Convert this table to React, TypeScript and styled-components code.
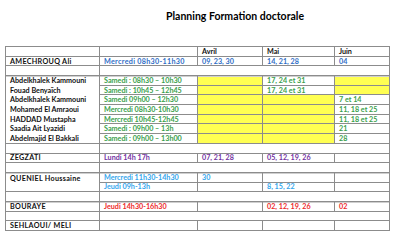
import React from "react";
import styled, { createGlobalStyle } from "styled-components";

const Global = createGlobalStyle`
  html, body { margin: 0; padding: 0; background: #ffffff; }
  body { font-family: Lato, "Liberation Sans", sans-serif; }
`;

const Page = styled.div`
  width: 400px;
  height: 250px;
  padding-left: 5px;
  box-sizing: border-box;
`;

const Title = styled.div`
  height: 46px;
  box-sizing: border-box;
  padding: 10px 0 0 161px;
  font-size: 10.5px;
  font-weight: 700;
  color: #000;
  line-height: 13px;
`;

const Grid = styled.div`
  display: grid;
  width: 385px;
  height: 185px;
  box-sizing: border-box;
  padding: 1px;
  gap: 1px;
  background: #8c8c8c;
  grid-template-columns: 93px 97px 64px 71px 54px;
  grid-template-rows: repeat(19, 1fr);
`;

type Tone = "black" | "blue" | "green" | "purple" | "sky" | "red";
const tones: Record<Tone, string> = {
  black: "#111111",
  blue: "#2f6ec6",
  green: "#3aa04c",
  purple: "#7232a2",
  sky: "#35a6ec",
  red: "#ee2a2a",
};

const Cell = styled.div<{
  $col: number;
  $row: number;
  $span?: number;
  $rows?: number;
  $yellow?: boolean;
  $tone?: Tone;
  $sep?: boolean;
  $top?: boolean;
  $spaced?: boolean;
}>`
  grid-column: ${(p) => p.$col} / span ${(p) => p.$span ?? 1};
  grid-row: ${(p) => p.$row} / span ${(p) => p.$rows ?? 1};
  background: ${(p) => (p.$yellow ? "#ffff52" : "#ffffff")};
  color: ${(p) => tones[p.$tone ?? "black"]};
  font-size: 7.2px;
  font-weight: 700;
  letter-spacing: ${(p) => (p.$spaced ? "0.3px" : "0")};
  line-height: 9px;
  padding: 0 3px 0 4px;
  display: flex;
  align-items: ${(p) => (p.$top ? "flex-start" : "center")};
  padding-top: ${(p) => (p.$top ? "1px" : "0")};
  white-space: nowrap;
  overflow: hidden;
  box-shadow: ${(p) => (p.$sep ? "inset 0 1px 0 #cfcfcf" : "none")};
  min-height: 0;
`;

const NameStack = styled.div<{ $row: number; $rows: number; $sep?: boolean }>`
  grid-column: 1;
  grid-row: ${(p) => p.$row} / span ${(p) => p.$rows};
  background: #ffffff;
  display: flex;
  flex-direction: column;
  box-shadow: ${(p) => (p.$sep ? "inset 0 1px 0 #cfcfcf" : "none")};
`;

const NameLine = styled.div`
  flex: 1;
  display: flex;
  align-items: center;
  padding: 0 3px 0 4px;
  font-size: 7.2px;
  font-weight: 700;
  line-height: 9px;
  color: #111111;
  white-space: nowrap;
`;

type Slot = { text?: string; tone?: Tone; yellow?: boolean };
const G: Tone = "green";

const group: { name: string; session: string; avril: Slot; mai: Slot; juin: Slot }[] = [
  { name: "Abdelkhalek Kammouni", session: "Samedi : 08h30 – 10h30", avril: { yellow: true }, mai: { text: "17, 24 et 31", tone: G }, juin: { yellow: true } },
  { name: "Fouad Benyaïch", session: "Samedi : 10h45 – 12h45", avril: { yellow: true }, mai: { text: "17, 24 et 31", tone: G }, juin: { yellow: true } },
  { name: "Abdelkhalek Kammouni", session: "Samedi 09h00 – 12h30", avril: { yellow: true }, mai: { yellow: true }, juin: { text: "7 et 14", tone: G } },
  { name: "Mohamed El Amraoui", session: "Mercredi 08h30-10h30", avril: { yellow: true }, mai: { yellow: true }, juin: { text: "11, 18 et 25", tone: G } },
  { name: "HADDAD Mustapha", session: "Mercredi 10h45-12h45", avril: { yellow: true }, mai: { yellow: true }, juin: { text: "11, 18 et 25", tone: G } },
  { name: "Saadia Ait Lyazidi", session: "Samedi : 09h00 – 13h", avril: { yellow: true }, mai: { yellow: true }, juin: { text: "21", tone: G } },
  { name: "Abdelmajid El Bakkali", session: "Samedi : 09h00 – 13h00", avril: { yellow: true }, mai: { yellow: true }, juin: { text: "28", tone: G } },
];

const Blank = ({ row, sep }: { row: number; sep?: boolean }) => (
  <>
    <Cell $col={1} $row={row} $sep={sep} />
    <Cell $col={2} $row={row} $span={4} $sep={sep} />
  </>
);

const SlotCell = ({ col, row, slot, sep }: { col: number; row: number; slot: Slot; sep?: boolean }) => (
  <Cell $col={col} $row={row} $yellow={slot.yellow} $tone={slot.tone} $sep={sep}>
    {slot.text}
  </Cell>
);

export default function App() {
  return (
    <Page>
      <Global />
      <Title>Planning Formation doctorale</Title>
      <Grid>
        <Cell $col={1} $row={1} />
        <Cell $col={2} $row={1} />
        <Cell $col={3} $row={1}>Avril</Cell>
        <Cell $col={4} $row={1}>Mai</Cell>
        <Cell $col={5} $row={1}>Juin</Cell>

        <Cell $col={1} $row={2} $spaced>AMECHROUQ Ali</Cell>
        <Cell $col={2} $row={2} $tone="blue" $spaced>Mercredi 08h30-11h30</Cell>
        <Cell $col={3} $row={2} $tone="blue">09, 23, 30</Cell>
        <Cell $col={4} $row={2} $tone="blue">14, 21, 28</Cell>
        <Cell $col={5} $row={2} $tone="blue">04</Cell>

        <Blank row={3} />

        <NameStack $row={4} $rows={7} $sep>
          {group.map((g, i) => (
            <NameLine key={i}>{g.name}</NameLine>
          ))}
        </NameStack>
        {group.map((g, i) => (
          <React.Fragment key={i}>
            <Cell $col={2} $row={4 + i} $tone="green" $sep={i === 0}>{g.session}</Cell>
            <SlotCell col={3} row={4 + i} slot={g.avril} sep={i === 0} />
            <SlotCell col={4} row={4 + i} slot={g.mai} sep={i === 0} />
            <SlotCell col={5} row={4 + i} slot={g.juin} sep={i === 0} />
          </React.Fragment>
        ))}

        <Blank row={11} />

        <Cell $col={1} $row={12} $spaced>ZEGZATI</Cell>
        <Cell $col={2} $row={12} $tone="purple">Lundi 14h 17h</Cell>
        <Cell $col={3} $row={12} $tone="purple">07, 21, 28</Cell>
        <Cell $col={4} $row={12} $tone="purple">05, 12, 19, 26</Cell>
        <Cell $col={5} $row={12} />

        <Blank row={13} />

        <Cell $col={1} $row={14} $rows={2} $sep $top $spaced>QUENIEL Houssaine</Cell>
        <Cell $col={2} $row={14} $tone="sky" $sep>Mercredi 11h30-14h30</Cell>
        <Cell $col={3} $row={14} $tone="sky" $sep>30</Cell>
        <Cell $col={4} $row={14} $sep />
        <Cell $col={5} $row={14} $sep />
        <Cell $col={2} $row={15} $tone="sky">Jeudi 09h-13h</Cell>
        <Cell $col={3} $row={15} />
        <Cell $col={4} $row={15} $tone="sky">8, 15, 22</Cell>
        <Cell $col={5} $row={15} />

        <Blank row={16} />

        <Cell $col={1} $row={17} $sep $spaced>BOURAYE</Cell>
        <Cell $col={2} $row={17} $tone="red" $sep>Jeudi 14h30-16h30</Cell>
        <Cell $col={3} $row={17} $sep />
        <Cell $col={4} $row={17} $tone="red" $sep>02, 12, 19, 26</Cell>
        <Cell $col={5} $row={17} $tone="red" $sep>02</Cell>

        <Blank row={18} />

        <Cell $col={1} $row={19} $spaced>SEHLAOUI/ MELI</Cell>
        <Cell $col={2} $row={19} />
        <Cell $col={3} $row={19} />
        <Cell $col={4} $row={19} />
        <Cell $col={5} $row={19} />
      </Grid>
    </Page>
  );
}
